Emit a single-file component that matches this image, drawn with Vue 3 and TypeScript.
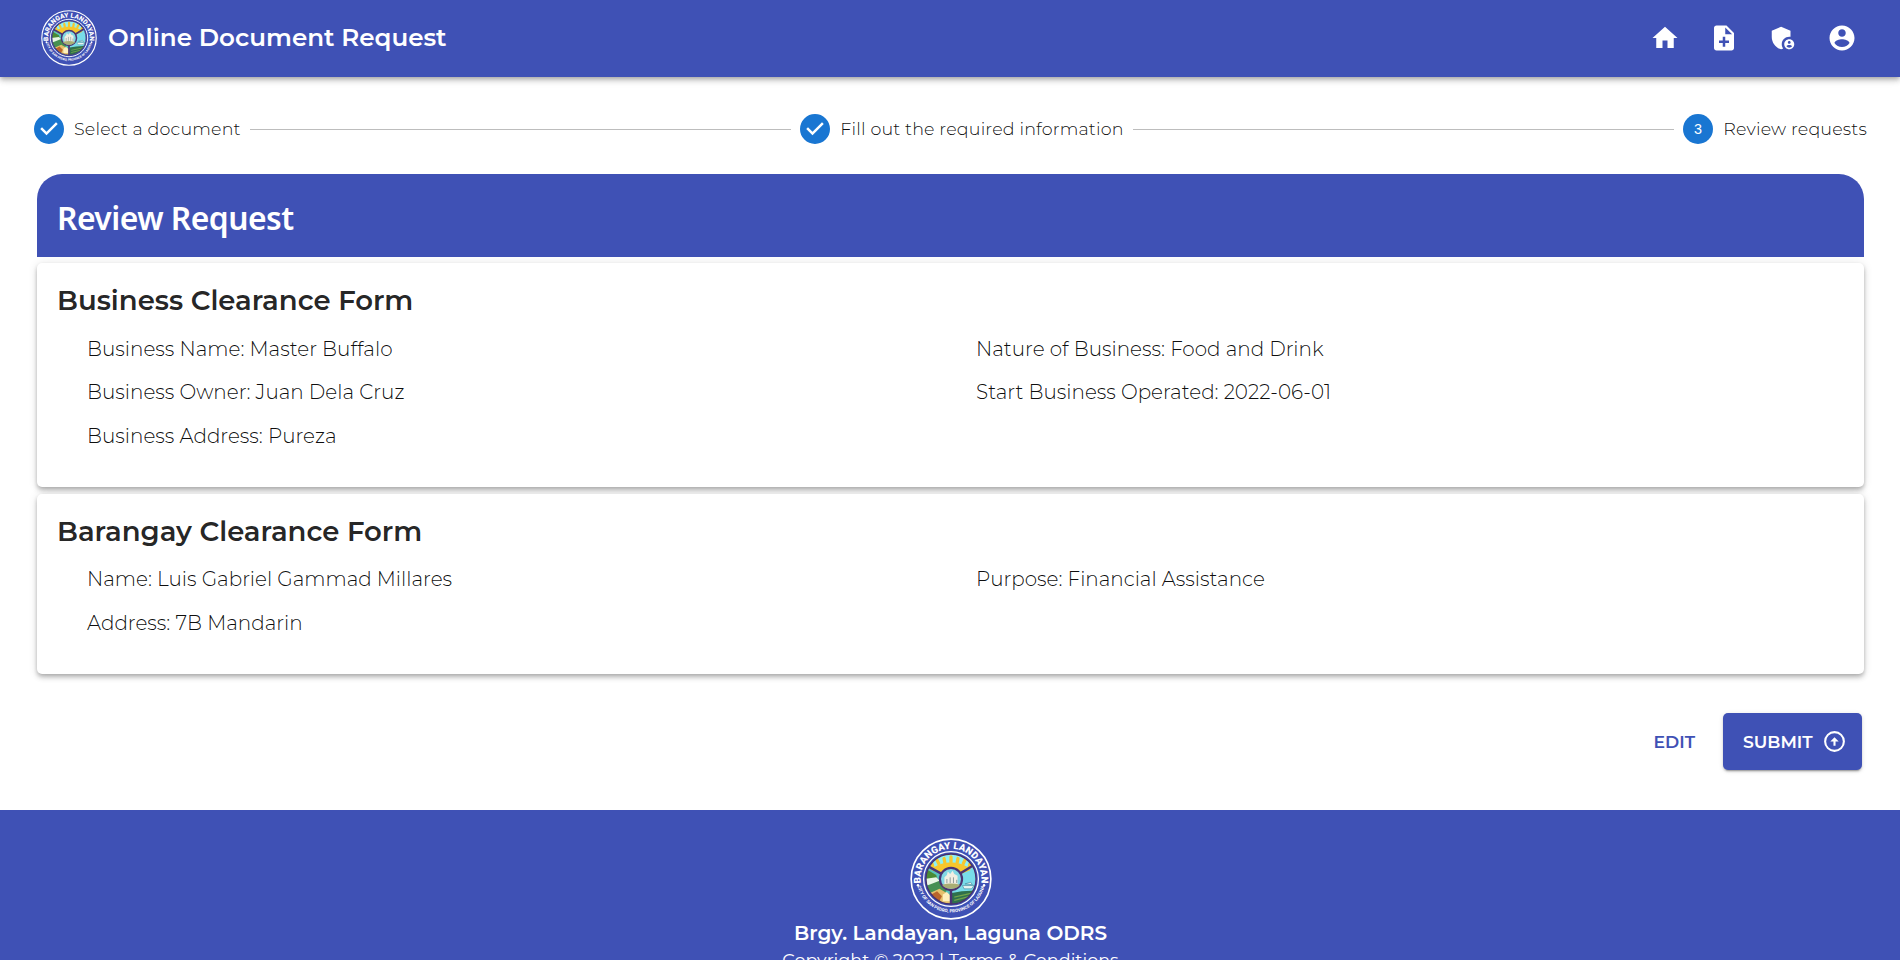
<script setup lang="ts">
interface Step { id: number; label: string; done: boolean }
interface FormCard { title: string; left: string[]; right: string[] }

const steps: Step[] = [
  { id: 1, label: 'Select a document', done: true },
  { id: 2, label: 'Fill out the required information', done: true },
  { id: 3, label: 'Review requests', done: false },
]

const navIcons: { name: string; path: string[] }[] = [
  { name: 'Home', path: ['M10 20v-6h4v6h5v-8h3L12 3 2 12h3v8z'] },
  { name: 'New request', path: ['M14 2H6c-1.1 0-1.99.9-1.99 2L4 20c0 1.1.89 2 1.99 2H18c1.1 0 2-.9 2-2V8l-6-6zm2 14h-3v3h-2v-3H8v-2h3v-3h2v3h3v2zm-3-7V3.5L18.5 9H13z'] },
  {
    name: 'Admin',
    path: [
      'M17 11c.34 0 .67.04 1 .09V6.27L10.5 3 3 6.27v4.91c0 4.54 3.2 8.79 7.5 9.82.55-.13 1.08-.32 1.6-.55-.69-.98-1.1-2.17-1.1-3.45 0-3.31 2.69-6 6-6z',
      'M17 13c-2.21 0-4 1.79-4 4s1.79 4 4 4 4-1.79 4-4-1.79-4-4-4zm0 1.38c.62 0 1.12.51 1.12 1.12s-.51 1.12-1.12 1.12-1.12-.51-1.12-1.12.5-1.12 1.12-1.12zm0 5.37c-.93 0-1.74-.46-2.24-1.17.05-.72 1.51-1.08 2.24-1.08s2.19.36 2.24 1.08c-.5.71-1.31 1.17-2.24 1.17z',
    ],
  },
  { name: 'Account', path: ['M12 2C6.48 2 2 6.48 2 12s4.48 10 10 10 10-4.48 10-10S17.52 2 12 2zm0 3c1.66 0 3 1.34 3 3s-1.34 3-3 3-3-1.34-3-3 1.34-3 3-3zm0 14.2c-2.5 0-4.71-1.28-6-3.22.03-1.99 4-3.08 6-3.08 1.99 0 5.97 1.09 6 3.08-1.29 1.94-3.5 3.22-6 3.22z'] },
]

const cards: FormCard[] = [
  {
    title: 'Business Clearance Form',
    left: ['Business Name: Master Buffalo', 'Business Owner: Juan Dela Cruz', 'Business Address: Pureza'],
    right: ['Nature of Business: Food and Drink', 'Start Business Operated: 2022-06-01'],
  },
  {
    title: 'Barangay Clearance Form',
    left: ['Name: Luis Gabriel Gammad Millares', 'Address: 7B Mandarin'],
    right: ['Purpose: Financial Assistance'],
  },
]
</script>

<template>
  <svg class="defs" width="0" height="0" aria-hidden="true">
    <defs>
      <path id="arc-top" d="M14.9 62 A37 37 0 1 1 85.1 62" />
      <path id="arc-bottom" d="M8.5 54 A41.8 41.8 0 0 0 91.5 54" />
      <clipPath id="seal-clip"><circle cx="50" cy="50" r="30.5" /></clipPath>
      <symbol id="seal" viewBox="0 0 100 100">
        <circle cx="50" cy="50" r="48.6" fill="none" stroke="#fff" stroke-width="2" />
        <circle cx="50" cy="50" r="33.4" fill="none" stroke="#fff" stroke-width="1.6" />
        <g clip-path="url(#seal-clip)">
          <rect x="18" y="18" width="64" height="64" fill="#8ff0f2" />
          <path d="M50 50 L20 32 V84 H50Z" fill="#58c3bd" />
          <path d="M18 37l14 8 2 7-14-2z" fill="#4b8b35" />
          <path d="M18 50l14-2 6 6-16 5z" fill="#e9f7e4" />
          <path d="M18 59l18-7 10 10-6 8-20 2z" fill="#469052" />
          <path d="M20 69l16-7 14 8v14H24z" fill="#e5c06b" />
          <path d="M24 70l9-5 6 6-5 9z" fill="#b9652c" />
          <path d="M40 69l5-3 4 4v7h-9z" fill="#fff0bc" />
          <path d="M50 50L80 32V84H50Z" fill="#79dce9" />
          <path d="M51 67l12-2 17-1v20H51z" fill="#2e704d" />
          <path d="M54 72l23-5M54 76l20-5" stroke="#71a34b" stroke-width="1.6" />
          <path d="M64 58h14l-3 4H66zM67 56l7-2 2 3z" fill="#e6f5f2" stroke="#397d95" stroke-width=".7" />
          <path d="M26 39Q33 30 50 29.500Q67 30 74 39L62 44H38Z" fill="#f7c62c" />
          <path d="M28 36l-1-4M35 31l-2-4M42.500 30l-1-5M50 29v-6M57.500 30l1-5M65 31l2-4M72 36l1-4" stroke="#f7c62c" stroke-width="4" stroke-linecap="round" />
          <path d="M50 50L21 34M50 50L78 33M50 55V84" stroke="#4a3372" stroke-width="3" />
        </g>
        <circle cx="50" cy="50" r="30.5" fill="none" stroke="#46306c" stroke-width="1.6" />
        <circle cx="50" cy="50" r="13.5" fill="#83d8e4" stroke="#4a3372" stroke-width="2.6" />
        <path d="M42 48l3-3 1-4 3 3 3-4 2 4 4 2v11H42z" fill="#f1eee2" />
        <path d="M45 50v5M49 48v7M53 48v7M57 51v4" stroke="#8d9b99" stroke-width="1.2" />
        <path d="M39 57q11-3 22 0-3 5-11 5t-11-5z" fill="#a9ae74" />
        <circle cx="9.7" cy="57.5" r="1.5" fill="#fff" />
        <circle cx="90.3" cy="57.5" r="1.5" fill="#fff" />
        <text class="seal-name"><textPath href="#arc-top" startOffset="50%" text-anchor="middle">BARANGAY LANDAYAN</textPath></text>
        <text class="seal-city"><textPath href="#arc-bottom" startOffset="50%" text-anchor="middle">CITY OF SAN PEDRO, PROVINCE OF LAGUNA</textPath></text>
      </symbol>
    </defs>
  </svg>

  <div class="page">
    <header class="topbar">
      <svg class="brand-seal"><use href="#seal" /></svg>
      <span class="brand-name">Online Document Request</span>
      <nav class="nav">
        <a v-for="icon in navIcons" :key="icon.name" class="nav-link" :aria-label="icon.name">
          <svg viewBox="0 0 24 24"><path v-for="p in icon.path" :key="p" :d="p" /></svg>
        </a>
      </nav>
    </header>

    <main class="content">
      <ol class="stepper">
        <template v-for="(step, i) in steps" :key="step.id">
          <li v-if="i > 0" class="connector" />
          <li class="step">
            <svg class="step-icon" viewBox="0 0 24 24">
              <path v-if="step.done" d="M12 0a12 12 0 1 0 0 24 12 12 0 0 0 0-24zm-2 17l-5-5 1.4-1.4 3.6 3.6 7.6-7.6L19 8l-9 9z" />
              <template v-else>
                <circle cx="12" cy="12" r="12" />
                <text x="12" y="16" text-anchor="middle">{{ step.id }}</text>
              </template>
            </svg>
            <span class="step-label">{{ step.label }}</span>
          </li>
        </template>
      </ol>

      <h1 class="banner">Review Request</h1>

      <section v-for="card in cards" :key="card.title" class="card">
        <h2>{{ card.title }}</h2>
        <div class="fields">
          <div><p v-for="f in card.left" :key="f">{{ f }}</p></div>
          <div><p v-for="f in card.right" :key="f">{{ f }}</p></div>
        </div>
      </section>

      <div class="actions">
        <button class="edit">EDIT</button>
        <button class="submit">
          <span>SUBMIT</span>
          <svg viewBox="0 0 24 24">
            <circle cx="12" cy="12" r="9" fill="none" stroke="currentColor" stroke-width="2" />
            <path d="M11 16v-4H8l4-4 4 4h-3v4z" />
          </svg>
        </button>
      </div>
    </main>

    <footer class="footer">
      <svg class="footer-seal"><use href="#seal" /></svg>
      <strong>Brgy. Landayan, Laguna ODRS</strong>
      <span class="copyright">Copyright © 2022 | Terms &amp; Conditions</span>
    </footer>
  </div>
</template>

<style>
body { margin: 0; background: #fff; overflow: hidden; }
</style>

<style scoped>
.defs { position: absolute; }
.seal-name { font: 900 11.8px Roboto, sans-serif; fill: #fff; }
.seal-city { font: 700 5.5px Roboto, sans-serif; fill: #fff; }

.page {
  height: 960px;
  overflow: hidden;
  display: flex;
  flex-direction: column;
  color: rgba(0, 0, 0, .87);
  font-family: Montserrat, Inter, "Liberation Sans", sans-serif;
}
.topbar {
  flex: none;
  height: 77px;
  box-sizing: border-box;
  display: flex;
  align-items: center;
  padding: 0 29px 2px 40px;
  background: #3f51b5;
  color: #fff;
  box-shadow: 0 2px 4px -1px rgba(0, 0, 0, .2), 0 4px 5px rgba(0, 0, 0, .14), 0 1px 10px rgba(0, 0, 0, .12);
}
.brand-seal { width: 58px; height: 56px; }
.brand-name { margin-left: 10px; padding-bottom: 2px; font-size: 24.6px; font-weight: 600; white-space: nowrap; }
.nav { margin-left: auto; display: flex; }
.nav-link { width: 59px; display: flex; justify-content: center; }
.nav-link svg { width: 30px; height: 30px; fill: currentColor; }

.content { flex: none; height: 733px; box-sizing: border-box; padding: 37px 36px 0 37px; }
.stepper { list-style: none; display: flex; align-items: center; margin: 0 -3px; padding: 0; height: 30px; }
.step { display: flex; align-items: center; flex: none; }
.step-icon { width: 30px; height: 30px; fill: #1976d2; }
.step-icon text { fill: #fff; font: 400 11.5px "Liberation Sans", sans-serif; }
.step-label { margin-left: 10px; font-size: 17.5px; font-weight: 300; letter-spacing: .16px; line-height: 30px; white-space: nowrap; color: rgba(0, 0, 0, .95); }
.connector { flex: 1; height: 1px; margin: 0 9.5px; background: #bdbdbd; }

.banner {
  height: 83px;
  box-sizing: border-box;
  margin: 30px 0 6px;
  padding: 0 20px;
  border-radius: 25px 25px 0 0;
  background: #3f51b5;
  color: #fff;
  font: 600 31.8px/87px "Noto Sans", sans-serif;
  letter-spacing: -.52px;
}
.card {
  box-sizing: border-box;
  margin-bottom: 7px;
  padding: 15px 20px 28px;
  border-radius: 5px;
  background: #fff;
  box-shadow: 0 2px 4px -1px rgba(0, 0, 0, .2), 0 4px 5px rgba(0, 0, 0, .14), 0 1px 10px rgba(0, 0, 0, .12);
}
.card h2 { margin: 0 0 4.6px; font-size: 27.5px; font-weight: 600; line-height: 45px; }
.card + .card h2 { margin-bottom: 5.6px; line-height: 44px; }
.fields { display: grid; grid-template-columns: 889px 1fr; padding: 0 0 .4px 30px; }
.fields p { margin: 0; font-size: 19.93px; font-weight: 300; line-height: 43.6px; color: rgba(0, 0, 0, .95); }

.actions { display: flex; justify-content: flex-end; align-items: center; margin-top: 39px; padding-right: 2px; gap: 18px; }
button { border: 0; margin: 0; font-family: inherit; font-size: 17.2px; font-weight: 600; }
.edit { background: none; color: #3f51b5; padding: 11px 10px 10px; }
.submit {
  display: flex;
  align-items: center;
  justify-content: space-between;
  width: 139px;
  height: 57px;
  padding: 1px 15px 0 20px;
  border-radius: 5px;
  background: #3f51b5;
  color: #fff;
  box-shadow: 0 3px 1px -2px rgba(0, 0, 0, .2), 0 2px 2px rgba(0, 0, 0, .14), 0 1px 5px rgba(0, 0, 0, .12);
}
.submit svg { width: 25px; height: 25px; fill: currentColor; }

.footer {
  flex: none;
  height: 190px;
  box-sizing: border-box;
  padding: 28px 0 0 1px;
  display: flex;
  flex-direction: column;
  align-items: center;
  background: #3f51b5;
  color: #fff;
}
.footer-seal { width: 82px; height: 82px; }
.footer strong { font-size: 20px; font-weight: 600; line-height: 26px; }
.copyright { font-size: 17.6px; line-height: 28px; font-weight: 400; }
</style>
